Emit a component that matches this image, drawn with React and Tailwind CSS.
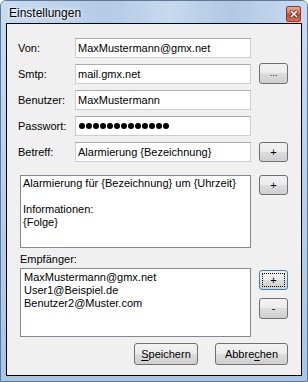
import React from 'react';

const fieldClass =
    'h-[20px] w-[176px] border border-[#cdcdcd] border-t-[#acacac] bg-white pl-[2px] flex items-center text-black';

const WinButton = ({ children, className = '', focused = false }) => (
    <div
        className={`relative flex items-center justify-center rounded-[3px] border ${focused ? 'border-[#3c7fb1]' : 'border-[#707070]'} bg-[linear-gradient(#f2f2f2_0%,#ebebeb_50%,#dddddd_50%,#cfcfcf_100%)] text-black ${className}`}
    >
        {focused && <div className="absolute inset-[2px] border border-dotted border-black" />}
        <span className="relative">{children}</span>
    </div>
);

const Row = ({ label, children, button }) => (
    <div className="flex items-center h-[20px]">
        <div className="w-[57px] shrink-0">{label}</div>
        {children}
        {button && <div className="ml-[8px]">{button}</div>}
    </div>
);

export default function App() {
    const dots = Array.from({ length: 13 });

    return (
        <div className="relative w-[308px] h-[382px] overflow-hidden rounded-t-[6px] border border-[#5f7896] bg-[linear-gradient(180deg,#c8dbf0_0%,#bcd2ec_40%,#a9c5e6_100%)] font-['Liberation_Sans',Arial,sans-serif] text-[11px] leading-[13px] text-black">
            {/* Title bar */}
            <div className="flex items-center justify-between h-[22px] pl-[8px] pr-[6px] bg-[linear-gradient(90deg,#c8dbf0_0%,#b4cbe6_35%,#c6d9ee_55%,#b2c9e4_75%,#c8dbf0_100%)]">
                <span className="text-[12px] leading-[14px] pt-[2px] [text-shadow:0_0_6px_#ffffff,0_0_3px_#ffffff]">Einstellungen</span>
                <div className="mt-[4px] flex items-center justify-center w-[15px] h-[16px] rounded-[2px] border border-[#8c3a2d] bg-[linear-gradient(#eaa89c_0%,#d9705e_45%,#c7402b_55%,#d7745d_100%)]">
                    <svg width="8" height="8" viewBox="0 0 8 8">
                        <path d="M1.5 1.5 L6.5 6.5 M6.5 1.5 L1.5 6.5" stroke="#5a2016" strokeWidth="3" strokeLinecap="square" />
                        <path d="M1.5 1.5 L6.5 6.5 M6.5 1.5 L1.5 6.5" stroke="#ffffff" strokeWidth="1.6" strokeLinecap="square" />
                    </svg>
                </div>
            </div>

            {/* Client area */}
            <div className="ml-[5px] w-[296px] h-[353px] border border-black bg-[#f0f0f0] pl-[11px] pt-[14px]">
                <div className="flex flex-col gap-[6px]">
                    <Row label="Von:">
                        <div className={fieldClass}>MaxMustermann@gmx.net</div>
                    </Row>
                    <Row
                        label="Smtp:"
                        button={<WinButton className="w-[29px] h-[21px] -mt-[1px] text-[9px]">...</WinButton>}
                    >
                        <div className={fieldClass}>mail.gmx.net</div>
                    </Row>
                    <Row label="Benutzer:">
                        <div className={fieldClass}>MaxMustermann</div>
                    </Row>
                    <Row label="Passwort:">
                        <div className={`${fieldClass} gap-[1px] pl-[3px]`}>
                            {dots.map((_, i) => (
                                <span key={i} className="w-[6px] h-[6px] rounded-full bg-black" />
                            ))}
                        </div>
                    </Row>
                    <Row
                        label="Betreff:"
                        button={<WinButton className="w-[29px] h-[20px]">+</WinButton>}
                    >
                        <div className={fieldClass}>Alarmierung {'{Bezeichnung}'}</div>
                    </Row>
                </div>

                {/* Message body */}
                <div className="flex mt-[13px] ml-[2px]">
                    <div className="w-[231px] h-[73px] border border-[#828790] bg-white pl-[2px] pt-[1px]">
                        <div>Alarmierung für {'{Bezeichnung}'} um {'{Uhrzeit}'}</div>
                        <div>&nbsp;</div>
                        <div>Informationen:</div>
                        <div>{'{Folge}'}</div>
                    </div>
                    <WinButton className="ml-[8px] w-[29px] h-[20px]">+</WinButton>
                </div>

                {/* Recipients */}
                <div className="ml-[2px] mt-[3px] h-[16px] flex items-center">Empfänger:</div>
                <div className="flex mt-[1px] ml-[2px]">
                    <div className="w-[231px] h-[69px] border border-[#828790] bg-white pl-[3px] pt-[2px]">
                        <div>MaxMustermann@gmx.net</div>
                        <div>User1@Beispiel.de</div>
                        <div>Benutzer2@Muster.com</div>
                    </div>
                    <div className="ml-[8px] mt-[2px] flex flex-col gap-[8px]">
                        <WinButton focused className="w-[29px] h-[20px]">+</WinButton>
                        <WinButton className="w-[29px] h-[21px]">-</WinButton>
                    </div>
                </div>

                {/* Footer buttons */}
                <div className="flex justify-end gap-[17px] mt-[6px] w-[270px]">
                    <WinButton className="w-[64px] h-[22px]">
                        <span className="underline underline-offset-2">S</span>peichern
                    </WinButton>
                    <WinButton className="w-[73px] h-[22px]">
                        Abbre<span className="underline underline-offset-2">c</span>hen
                    </WinButton>
                </div>
            </div>
        </div>
    );
}
